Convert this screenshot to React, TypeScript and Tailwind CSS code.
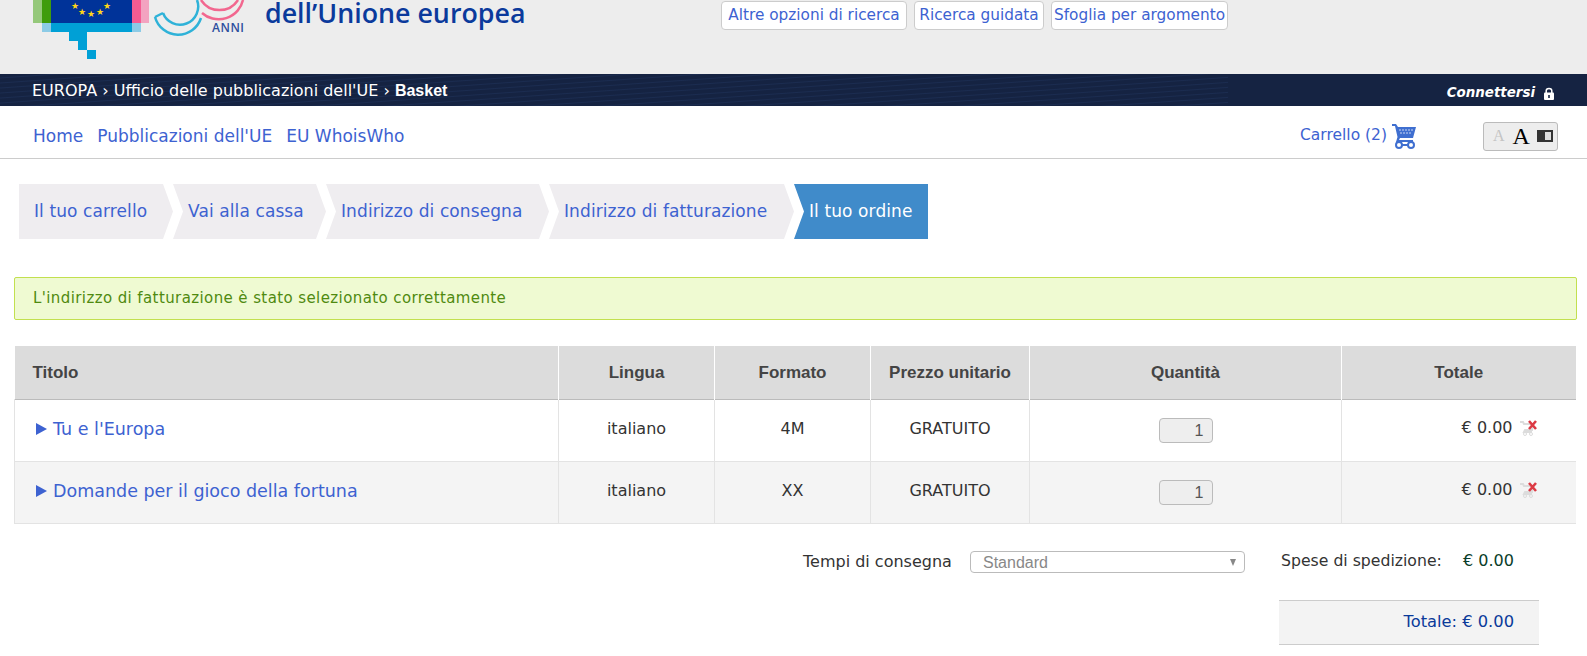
const steps = [
  { label: "Il tuo carrello", w: "w-[154px]", shape: "[clip-path:polygon(0_0,calc(100%-10px)_0,100%_50%,calc(100%-10px)_100%,0_100%)]" },
  { label: "Vai alla cassa", w: "w-[153px]", shape: "[clip-path:polygon(0_0,calc(100%-10px)_0,100%_50%,calc(100%-10px)_100%,0_100%,10px_50%)]" },
  { label: "Indirizzo di consegna", w: "w-[223px]", shape: "[clip-path:polygon(0_0,calc(100%-10px)_0,100%_50%,calc(100%-10px)_100%,0_100%,10px_50%)]" },
  { label: "Indirizzo di fatturazione", w: "w-[245px]", shape: "[clip-path:polygon(0_0,calc(100%-10px)_0,100%_50%,calc(100%-10px)_100%,0_100%,10px_50%)]" },
];

const rows = [
  { title: "Tu e l'Europa", format: "4M", bg: "bg-white" },
  { title: "Domande per il gioco della fortuna", format: "XX", bg: "bg-[#f4f4f4]" },
];

const Logo = () => (
  <svg width="250" height="60" viewBox="33 0 250 60" className="shrink-0">
    <rect x="33" y="0" width="9" height="23" fill="#95c87a" />
    <rect x="42" y="0" width="9" height="23" fill="#3f9c0c" />
    <rect x="51" y="0" width="81" height="23" fill="#003399" />
    <rect x="132" y="0" width="9" height="23" fill="#f65b92" />
    <rect x="141" y="0" width="8" height="23" fill="#f3a3c0" />
    <rect x="42" y="23" width="9" height="9" fill="#8ccbe6" />
    <rect x="51" y="23" width="81" height="9" fill="#00a0d6" />
    <rect x="132" y="23" width="9" height="9" fill="#8ccbe6" />
    <rect x="69" y="32" width="18" height="9" fill="#00a0d6" />
    <rect x="78" y="41" width="9" height="9" fill="#00a0d6" />
    <rect x="87" y="50" width="9" height="9" fill="#00a0d6" />
    <text x="71" y="9" fontSize="9" fill="#ffd617">★</text>
    <text x="78" y="15" fontSize="9" fill="#ffd617">★</text>
    <text x="87" y="17" fontSize="9" fill="#ffd617">★</text>
    <text x="96" y="15" fontSize="9" fill="#ffd617">★</text>
    <text x="103" y="9" fontSize="9" fill="#ffd617">★</text>
    <path d="M155 17 L163 13" stroke="#2fb2d8" strokeWidth="2.5" fill="none" />
    <path d="M155 17 A 24 24 0 0 0 201 18" stroke="#2fb2d8" strokeWidth="2.5" fill="none" />
    <path d="M163 13 A 18 18 0 0 0 197 0" stroke="#2fb2d8" strokeWidth="2.5" fill="none" />
    <path d="M202 13 A 25 25 0 0 0 243 0" stroke="#f2678f" strokeWidth="2.5" fill="none" />
    <path d="M201 0 A 22 22 0 0 0 238 0" stroke="#f2678f" strokeWidth="2.5" fill="none" />
    <text x="212" y="32" fontSize="12" fontWeight="600" fill="#2d4f9e" fontFamily="'Open Sans', sans-serif" textLength="32">ANNI</text>
  </svg>
);

const CartIcon = () => (
  <svg width="24" height="26" viewBox="0 0 24 26" className="shrink-0">
    <path d="M0 1 H4 L6 4 H24 L21 15 H8 L7 17 H21 V19 H4 L5.5 14 L3 3 H0 Z" fill="#3f6fd0" />
    <path d="M7 7 H21 M8 10 H20" stroke="#c9d6f3" strokeWidth="1" strokeDasharray="2 1" />
    <circle cx="7" cy="22" r="3" fill="none" stroke="#3f6fd0" strokeWidth="2" />
    <circle cx="19" cy="22" r="3" fill="none" stroke="#3f6fd0" strokeWidth="2" />
    <path d="M10 22 H16" stroke="#3f6fd0" strokeWidth="2" />
  </svg>
);

const RemoveIcon = () => (
  <svg width="18" height="18" viewBox="0 0 18 18" className="shrink-0">
    <path d="M0 3 H3 L4 5 H13 L12 11 H5 L4 13 H12" fill="none" stroke="#dcdcdc" strokeWidth="2" />
    <circle cx="5" cy="15" r="1.5" fill="none" stroke="#dcdcdc" />
    <circle cx="11" cy="15" r="1.5" fill="none" stroke="#dcdcdc" />
    <path d="M9 2 L16 10 M16 2 L9 10" stroke="#dc3a44" strokeWidth="2.6" />
  </svg>
);

const LockIcon = () => (
  <svg width="12" height="13" viewBox="0 0 12 13" className="mt-px">
    <rect x="1" y="5.5" width="10" height="7.5" rx="1" fill="#fff" />
    <path d="M3.2 6 V3.8 C3.2 0.6 8.8 0.6 8.8 3.8 V6" fill="none" stroke="#fff" strokeWidth="1.5" />
    <rect x="5.2" y="8" width="1.6" height="3" fill="#152342" />
  </svg>
);

export default function App() {
  return (
    <div className="h-[656px] w-[1587px] overflow-hidden bg-white font-['DejaVu_Sans',sans-serif] text-[#333]">
      <header className="flex h-[74px] items-start overflow-hidden bg-[#ededed] pl-[33px]">
        <Logo />
        <div className="-ml-[18px] w-[456px] font-['Open_Sans',sans-serif] text-[26.8px] leading-[26px] font-semibold whitespace-nowrap text-[#0b3a9c]">
          dell’Unione europea
        </div>
        <div className="mt-px flex gap-[7px] text-[15.3px] text-[#3d62d1]">
          <a className="flex h-[29px] w-[186px] items-center justify-center rounded-[4px] border border-[#ccc] bg-white">Altre opzioni di ricerca</a>
          <a className="flex h-[29px] w-[130px] items-center justify-center rounded-[4px] border border-[#ccc] bg-white">Ricerca guidata</a>
          <a className="flex h-[29px] w-[177px] items-center justify-center rounded-[4px] border border-[#ccc] bg-white">Sfoglia per argomento</a>
        </div>
      </header>

      <div className="flex h-[32px] items-center justify-between bg-[#152342] bg-[repeating-linear-gradient(176deg,#152342_0px,#152342_3px,#1b2c50_4px,#152342_5px)] bg-[length:1228px_100%] bg-no-repeat pr-[32px] pl-[32px] text-[16px] text-white">
        <div className="pt-px">
          EUROPA › Ufficio delle pubblicazioni dell'UE › <b className="font-['Liberation_Sans',sans-serif]">Basket</b>
        </div>
        <div className="flex items-center gap-[8px] pt-[6px] text-[13.4px] font-bold italic">
          Connettersi <LockIcon />
        </div>
      </div>

      <nav className="flex h-[53px] items-center border-b border-[#ccc] pt-[8px] pr-[29px] pl-[33px] text-[#3d62d1]">
        <div className="flex gap-[14px] pt-px text-[17px]">
          <a>Home</a>
          <a>Pubblicazioni dell'UE</a>
          <a>EU WhoisWho</a>
        </div>
        <div className="ml-auto flex items-center gap-[5px] text-[15.5px]">
          <span>Carrello (2)</span>
          <CartIcon />
        </div>
        <div className="ml-[67px] flex h-[29px] w-[75px] items-center gap-[8px] rounded-[3px] border border-[#bbb] bg-[#ededed] pl-[9px] font-['Liberation_Serif',serif]">
          <span className="text-[16px] text-[#c4c4c4]">A</span>
          <span className="text-[24px] leading-none text-black">A</span>
          <span className="-ml-px flex h-[12px] w-[16px] border-2 border-[#333] bg-[#ddd]">
            <span className="h-full w-[6px] bg-[#333]" />
          </span>
        </div>
      </nav>

      <div className="mt-[25px] ml-[19px] flex h-[55px] text-[17px] tracking-[0.1px] text-[#3d62d1]">
        {steps.map((s) => (
          <a key={s.label} className={`flex items-center bg-[#efedf0] pl-[15px] ${s.w} ${s.shape}`}>
            {s.label}
          </a>
        ))}
        <a className="flex w-[134px] items-center bg-[#408bca] pl-[15px] text-white [clip-path:polygon(0_0,100%_0,100%_100%,0_100%,10px_50%)]">
          Il tuo ordine
        </a>
      </div>

      <div className="mt-[38px] ml-[14px] flex h-[43px] w-[1563px] items-center rounded-[2px] border border-[#c2e04f] bg-[#effad2] pl-[18px] text-[15px] tracking-[0.4px] text-[#4f8a10]">
        L'indirizzo di fatturazione è stato selezionato correttamente
      </div>

      <table className="mt-[26px] ml-[14px] w-[1561px] table-fixed border-collapse text-center text-[16px]">
        <colgroup>
          <col className="w-[544px]" />
          <col className="w-[156px]" />
          <col className="w-[156px]" />
          <col className="w-[159px]" />
          <col className="w-[312px]" />
          <col className="w-[234px]" />
        </colgroup>
        <thead>
          <tr className="h-[53px] border-b border-[#bbb] bg-[#dcdcdc] font-['Liberation_Sans',sans-serif] text-[17px] font-bold text-[#444]">
            <th className="border-r border-white pl-[18px] text-left">Titolo</th>
            <th className="border-r border-white">Lingua</th>
            <th className="border-r border-white">Formato</th>
            <th className="border-r border-white">Prezzo unitario</th>
            <th className="border-r border-white">Quantità</th>
            <th>Totale</th>
          </tr>
        </thead>
        <tbody>
          {rows.map((r) => (
            <tr key={r.title} className={`h-[62px] border-b border-[#e3e3e3] ${r.bg}`}>
              <td className="border-r border-l border-[#e3e3e3] pb-[2px] pl-[21px] text-left text-[17.5px] text-[#3d62d1]">
                <span className="flex items-center gap-[6px]">
                  <span className="h-0 w-0 border-y-[6px] border-l-[11px] border-y-transparent border-l-[#3d62d1]" />
                  {r.title}
                </span>
              </td>
              <td className="border-r border-[#e3e3e3] pb-[3px]">italiano</td>
              <td className="border-r border-[#e3e3e3] pb-[3px]">{r.format}</td>
              <td className="border-r border-[#e3e3e3] pb-[3px]">GRATUITO</td>
              <td className="border-r border-[#e3e3e3]">
                <div className="mx-auto flex h-[25px] w-[54px] items-center justify-end rounded-[4px] border border-[#bbb] bg-[#eee] pt-[2px] pr-[8px] font-['Liberation_Sans',sans-serif] text-[16px] text-[#555]">1</div>
              </td>
              <td className="pb-[4px]">
                <div className="flex items-center justify-end gap-[7px] pr-[38px]">
                  € 0.00 <RemoveIcon />
                </div>
              </td>
            </tr>
          ))}
        </tbody>
      </table>

      <div className="mt-[27px] flex h-[23px] items-center pl-[803px] text-[16px]">
        <span className="w-[167px] pb-[1px]">Tempi di consegna</span>
        <div className="flex h-[22px] w-[275px] items-center justify-between rounded-[4px] border border-[#bbb] pt-px pr-[8px] pl-[12px] font-['Liberation_Sans',sans-serif] text-[#888]">
          Standard
          <span className="h-0 w-0 border-x-[3.5px] border-t-[7px] border-x-transparent border-t-[#888]" />
        </div>
        <span className="ml-[36px] w-[182px] pb-[2px] text-[15.7px]">Spese di spedizione:</span>
        <span className="pb-[2px] text-[#0a3d2a]">€ 0.00</span>
      </div>

      <div className="mt-[26px] ml-[1279px] flex h-[45px] w-[260px] items-center justify-end border-y border-[#ccc] bg-[#f3f3f3] pt-px pr-[25px] text-[16.3px] text-[#0a3a9a]">
        Totale: € 0.00
      </div>
    </div>
  );
}
